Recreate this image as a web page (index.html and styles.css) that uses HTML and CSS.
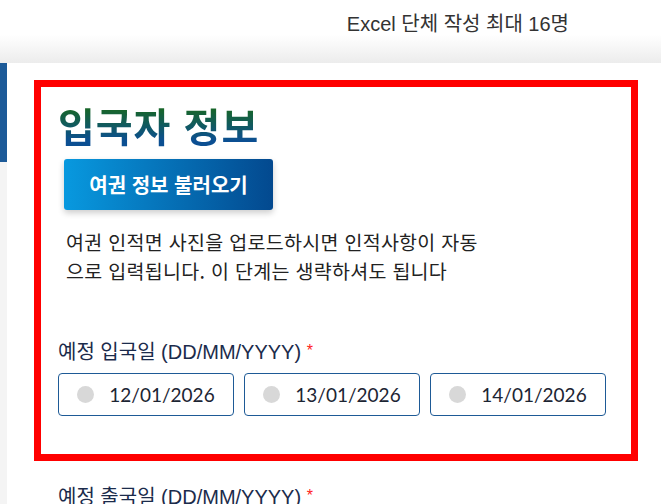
FILE: index.html
```html
<!DOCTYPE html>
<html lang="ko">
<head>
    <meta charset="UTF-8">
    <meta name="viewport" content="width=device-width, initial-scale=1.0">
    <title>입국자 정보</title>
    <link rel="stylesheet" href="styles.css">
</head>
<body>
    <header class="topbar">
        <span class="excel-note">Excel 단체 작성 최대 16명</span>
    </header>

    <div class="layout">
        <aside class="side">
            <div class="side-active"></div>
        </aside>

        <main class="panel">
            <section class="highlight">
                <h1 class="title">입국자 정보</h1>
                <button type="button" class="passport-btn">여권 정보 불러오기</button>
                <p class="desc">여권 인적면 사진을 업로드하시면 인적사항이 자동으로 입력됩니다. 이 단계는 생략하셔도 됩니다</p>

                <div class="field">
                    <label class="field-label">예정 입국일 (DD/MM/YYYY) <span class="req">*</span></label>
                    <div class="date-options">
                        <label class="date-option"><span class="dot"></span>12/01/2026</label>
                        <label class="date-option"><span class="dot"></span>13/01/2026</label>
                        <label class="date-option"><span class="dot"></span>14/01/2026</label>
                    </div>
                </div>
            </section>

            <div class="field field-next">
                <label class="field-label">예정 출국일 (DD/MM/YYYY) <span class="req">*</span></label>
            </div>
        </main>
    </div>
</body>
</html>
```

FILE: styles.css
```css
body
{
    margin: 0;
    background: #f4f4f4;
    font-family: "Liberation Sans", "Noto Sans CJK KR", sans-serif;
    color: #222;
}
.topbar
{
    height: 63px;
    background: linear-gradient(to bottom, #fff 0%, #fff 55%, #ececec 100%);
    display: flex;
    justify-content: flex-end;
    padding-right: 92px;
}
.excel-note
{
    margin-top: 8px;
    font-size: 20px;
    color: #333;
}
.layout
{
    display: flex;
}
.side
{
    width: 7px;
    flex-shrink: 0;
}
.side-active
{
    height: 99px;
    background: #1c5a98;
}
.panel
{
    flex: 1;
    background: #fff;
    padding: 17px 23px 0 27px;
    min-height: 441px;
}
.highlight
{
    border: 7px solid #ff0000;
    padding: 12px 25px 38px 17px;
}
.title
{
    margin: 0;
    font-family: "Noto Sans CJK KR", sans-serif;
    font-size: 40px;
    font-weight: 700;
    line-height: 52px;
    letter-spacing: 1px;
    background: linear-gradient(to bottom, #17652a 20%, #0b4f92 80%);
    -webkit-background-clip: text;
    background-clip: text;
    color: transparent;
}
.passport-btn
{
    display: block;
    margin: 8px 0 0 6px;
    width: 209px;
    height: 51px;
    border: none;
    border-radius: 3px;
    background: linear-gradient(to right, #0899df, #03498f);
    color: #fff;
    font-family: "Noto Sans CJK KR", sans-serif;
    font-size: 20px;
    font-weight: 700;
    box-shadow: 0 3px 6px rgba(0, 0, 0, 0.2);
    cursor: pointer;
}
.desc
{
    margin: 17px 0 0 8px;
    max-width: 424px;
    font-family: "Noto Sans CJK KR", sans-serif;
    font-size: 19.5px;
    letter-spacing: 0.3px;
    line-height: 29px;
    word-break: break-all;
    color: #222;
}
.field
{
    margin-top: 54px;
}
.field-label
{
    display: block;
    font-size: 20px;
    color: #1b2b4b;
    line-height: 24px;
}
.req
{
    color: #ff2020;
    font-size: 16px;
    vertical-align: 3px;
}
.date-options
{
    display: flex;
    gap: 10px;
    margin-top: 9px;
}
.date-option
{
    width: 176px;
    height: 43px;
    box-sizing: border-box;
    border: 1px solid #1e5a96;
    border-radius: 4px;
    display: flex;
    align-items: center;
    justify-content: center;
    gap: 15px;
    font-family: "Lato", sans-serif;
    font-size: 19px;
    color: #1c2533;
}
.dot
{
    width: 17px;
    height: 17px;
    border-radius: 50%;
    background: #d8d8d8;
}
.field-next
{
    margin: 23px 0 0 24px;
}
```
